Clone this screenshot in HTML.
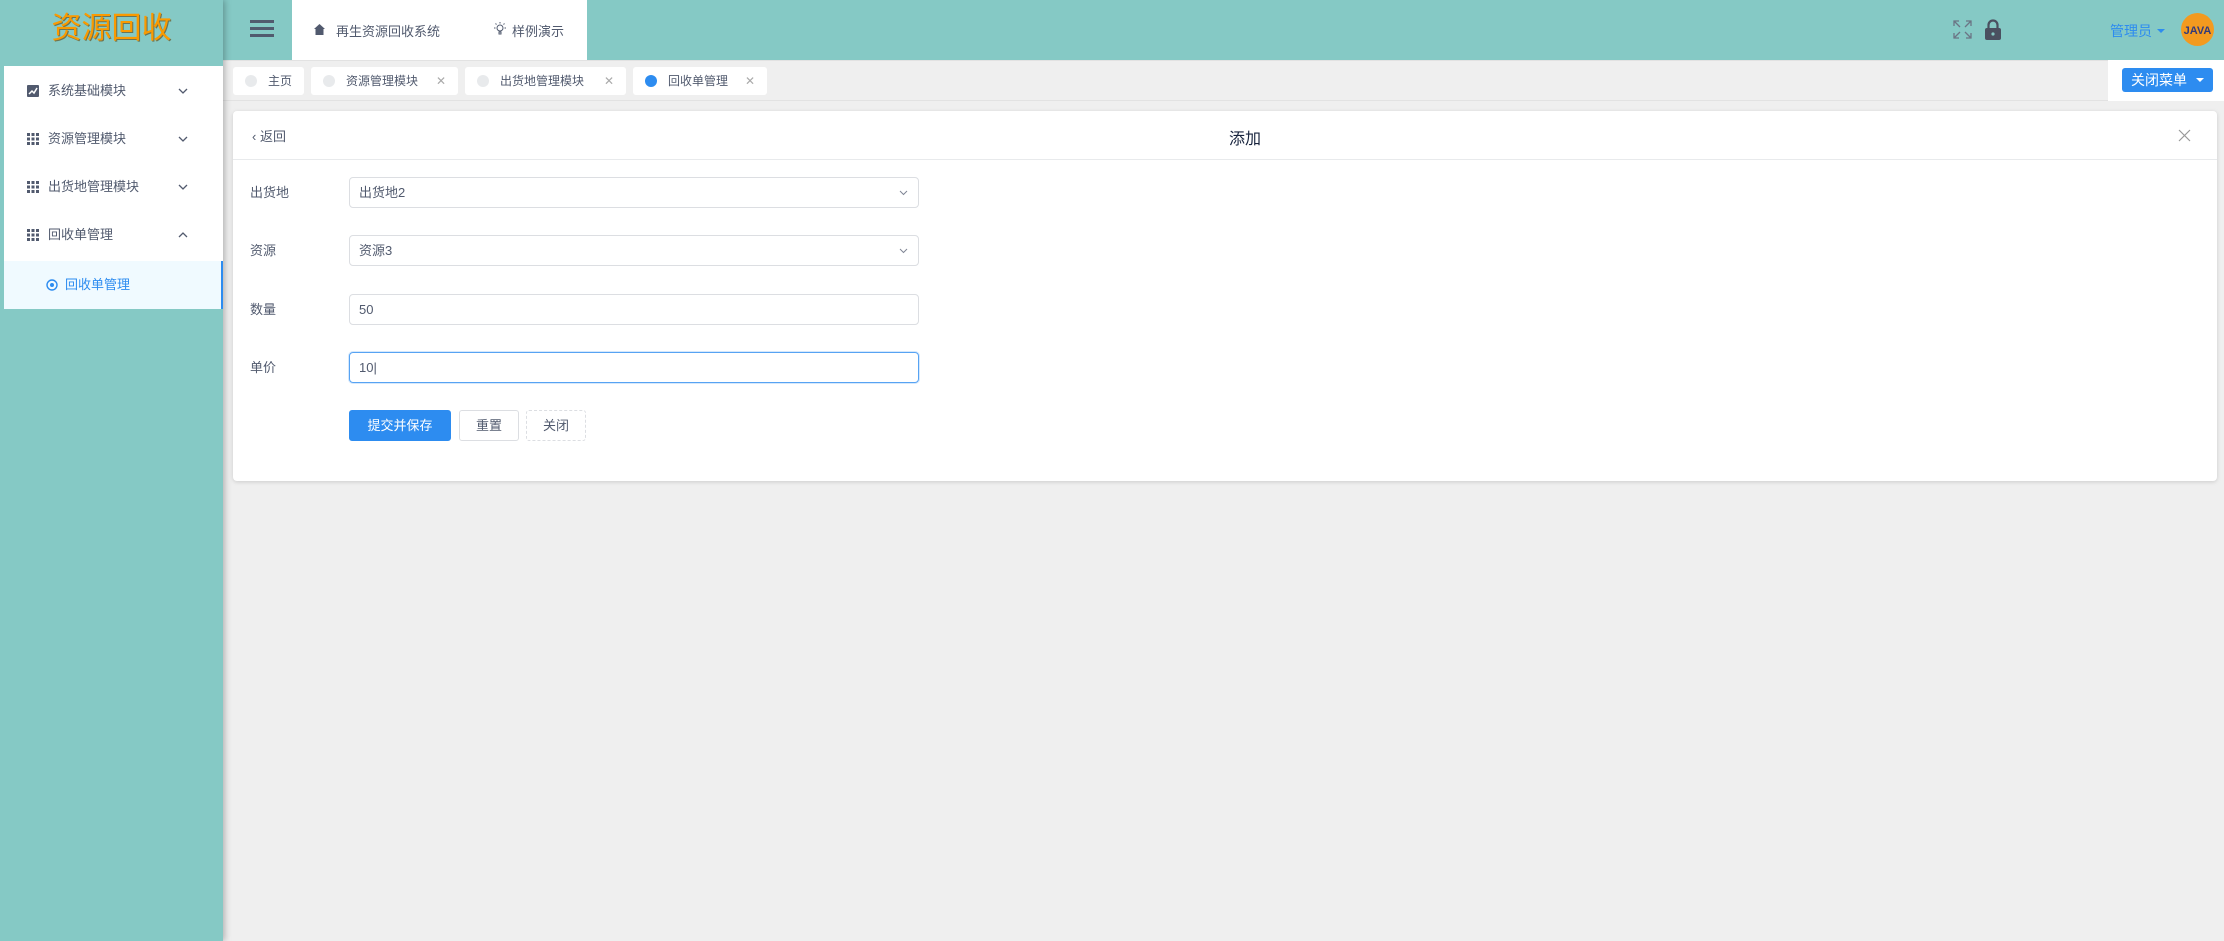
<!DOCTYPE html>
<html><head><meta charset="utf-8"><style>
*{box-sizing:border-box;margin:0;padding:0}
body{width:2224px;height:941px;overflow:hidden;background:#efefef;font-family:"Liberation Sans","Noto Sans CJK SC",sans-serif;font-size:14px;color:#515a6e;position:relative}
.abs{position:absolute}
#side{left:0;top:0;width:223px;height:941px;background:#85c9c5;box-shadow:2px 0 6px rgba(0,0,0,.25);z-index:3}
#logo{left:0;top:0;width:223px;height:62px;text-align:center;line-height:58px;font-size:30px;color:#fa9a00;text-shadow:1px 1px 0 rgba(90,60,10,.6)}
#menu{left:4px;top:66px;width:219px;height:243px;background:#fff}
.mi{position:absolute;left:0;width:219px;height:48px;line-height:48px;font-size:13px;color:#515a6e}
.mi .ic{position:absolute;left:23px;top:18px;width:12px;height:12px}
.mi .t{position:absolute;left:44px}
.mi .ch{position:absolute;left:174px;top:0;font-size:12px}
#sub{top:195px;height:48px;background:#f0faff;border-right:2px solid #2d8cf0;color:#2d8cf0}
#header{left:223px;top:0;right:0;height:60px;background:#85c9c5}
.ham{left:27px;top:20px;width:24px;height:3px;background:#515a6e}
#topw{left:69px;top:0;width:295px;height:60px;background:#fff}
.tabsbar{left:223px;top:60px;right:0;height:41px;background:#efefef;border-top:1px solid #e2e2e2;border-bottom:1px solid #e2e2e2}
.tab{position:absolute;top:6px;height:28px;background:#fff;border-radius:3px;font-size:12px;line-height:28px;color:#515a6e}
.tab .d{position:absolute;left:12px;top:8px;width:12px;height:12px;border-radius:50%;background:#e8eaec}
.tab .t{position:absolute;left:35px}
.tab .x{position:absolute;right:12px;color:#aaa;font-size:12px}
#card{left:233px;top:111px;width:1984px;height:370px;background:#fff;border-radius:4px;box-shadow:0 1px 4px rgba(0,0,0,.15)}
.lab{position:absolute;left:17px;font-size:13px;line-height:32px}
.inp{position:absolute;left:116px;width:570px;height:31px;border:1px solid #dcdee2;border-radius:4px;padding-left:9px;line-height:29px;font-size:13px;color:#515a6e}
.btn{position:absolute;top:299px;height:31px;border-radius:3px;font-size:13px;line-height:29px;text-align:center}
</style></head><body>
<div id="side" class="abs">
 <div id="logo" class="abs">资源回收</div>
 <div id="menu" class="abs">
  <div class="mi" style="top:1px"><svg class="ic" viewBox="0 0 12 12"><rect width="12" height="12" rx="1" fill="#515a6e"/><path d="M2 9 L5 6 L7 8 L10 3" stroke="#fff" stroke-width="1.5" fill="none"/></svg><span class="t">系统基础模块</span><svg class="ch" style="top:20px;width:10px;height:8px" viewBox="0 0 10 8"><path d="M1 2 L5 6 L9 2" stroke="#515a6e" fill="none" stroke-width="1.3"/></svg></div>
  <div class="mi" style="top:49px"><svg class="ic" viewBox="0 0 12 12" fill="#515a6e"><rect x="0" y="0" width="3" height="3"/><rect x="4.5" y="0" width="3" height="3"/><rect x="9" y="0" width="3" height="3"/><rect x="0" y="4.5" width="3" height="3"/><rect x="4.5" y="4.5" width="3" height="3"/><rect x="9" y="4.5" width="3" height="3"/><rect x="0" y="9" width="3" height="3"/><rect x="4.5" y="9" width="3" height="3"/><rect x="9" y="9" width="3" height="3"/></svg><span class="t">资源管理模块</span><svg class="ch" style="top:20px;width:10px;height:8px" viewBox="0 0 10 8"><path d="M1 2 L5 6 L9 2" stroke="#515a6e" fill="none" stroke-width="1.3"/></svg></div>
  <div class="mi" style="top:97px"><svg class="ic" viewBox="0 0 12 12" fill="#515a6e"><rect x="0" y="0" width="3" height="3"/><rect x="4.5" y="0" width="3" height="3"/><rect x="9" y="0" width="3" height="3"/><rect x="0" y="4.5" width="3" height="3"/><rect x="4.5" y="4.5" width="3" height="3"/><rect x="9" y="4.5" width="3" height="3"/><rect x="0" y="9" width="3" height="3"/><rect x="4.5" y="9" width="3" height="3"/><rect x="9" y="9" width="3" height="3"/></svg><span class="t">出货地管理模块</span><svg class="ch" style="top:20px;width:10px;height:8px" viewBox="0 0 10 8"><path d="M1 2 L5 6 L9 2" stroke="#515a6e" fill="none" stroke-width="1.3"/></svg></div>
  <div class="mi" style="top:145px"><svg class="ic" viewBox="0 0 12 12" fill="#515a6e"><rect x="0" y="0" width="3" height="3"/><rect x="4.5" y="0" width="3" height="3"/><rect x="9" y="0" width="3" height="3"/><rect x="0" y="4.5" width="3" height="3"/><rect x="4.5" y="4.5" width="3" height="3"/><rect x="9" y="4.5" width="3" height="3"/><rect x="0" y="9" width="3" height="3"/><rect x="4.5" y="9" width="3" height="3"/><rect x="9" y="9" width="3" height="3"/></svg><span class="t">回收单管理</span><svg class="ch" style="top:20px;width:10px;height:8px" viewBox="0 0 10 8"><path d="M1 6 L5 2 L9 6" stroke="#515a6e" fill="none" stroke-width="1.3"/></svg></div>
  <div class="mi" id="sub"><svg class="ic" style="left:42px" viewBox="0 0 12 12"><circle cx="6" cy="6" r="5" stroke="#2d8cf0" stroke-width="1.4" fill="none"/><circle cx="6" cy="6" r="2" fill="#2d8cf0"/></svg><span class="t" style="left:61px">回收单管理</span></div>
 </div>
</div>
<div id="header" class="abs">
 <div class="abs ham"></div><div class="abs ham" style="top:27px"></div><div class="abs ham" style="top:34px"></div>
 <div id="topw" class="abs">
  <svg class="abs" style="left:22px;top:24px" width="11" height="11" viewBox="0 0 11 11"><path d="M5.5 0 L11 5 L9.5 5 L9.5 11 L1.5 11 L1.5 5 L0 5 Z" fill="#515a6e"/></svg>
  <span class="abs" style="left:44px;top:21px;font-size:13px">再生资源回收系统</span>
  <svg class="abs" style="left:201px;top:22px" width="14" height="14" viewBox="0 0 14 14" stroke="#515a6e" fill="none"><circle cx="7" cy="6" r="3"/><path d="M6 10h2v2h-2zM7 0v1.5M1 6h1.5M11.5 6H13M2.5 1.5l1 1M11.5 1.5l-1 1"/></svg>
  <span class="abs" style="left:220px;top:21px;font-size:13px">样例演示</span>
 </div>
 <svg class="abs" style="left:1730px;top:20px" width="19" height="19" viewBox="0 0 19 19" stroke="#6b7585" stroke-width="1.3" fill="none"><path d="M1 6V1h5M1 1l6 6M18 6V1h-5M18 1l-6 6M1 13v5h5M1 18l6-6M18 13v5h-5M18 18l-6-6"/></svg>
 <svg class="abs" style="left:1762px;top:19px" width="16" height="21" viewBox="0 0 16 21"><path d="M3.5 9V6a4.5 4.5 0 0 1 9 0v3" stroke="#4a5060" stroke-width="2.2" fill="none"/><rect x="0" y="9" width="16" height="12" rx="2" fill="#4a5060"/><circle cx="8" cy="15" r="1.6" fill="#85c9c5"/></svg>
 <span class="abs" style="left:1887px;top:21px;color:#2d8cf0;font-size:14px">管理员</span>
 <span class="abs" style="left:1934px;top:29px;border:4px solid transparent;border-top:4px solid #2d8cf0"></span>
 <div class="abs" style="left:1958px;top:13px;width:33px;height:33px;border-radius:50%;background:#f39a1f;text-align:center;font-size:11px;font-weight:bold;color:#333a7a;line-height:36px">JAVA</div>
</div>
<div class="abs tabsbar">
 <div class="tab" style="left:10px;width:71px"><span class="d"></span><span class="t">主页</span></div>
 <div class="tab" style="left:88px;width:147px"><span class="d"></span><span class="t">资源管理模块</span><span class="x">✕</span></div>
 <div class="tab" style="left:242px;width:161px"><span class="d"></span><span class="t">出货地管理模块</span><span class="x">✕</span></div>
 <div class="tab" style="left:410px;width:134px"><span class="d" style="background:#2d8cf0"></span><span class="t">回收单管理</span><span class="x">✕</span></div>
 <div class="abs" style="left:1885px;top:-1px;width:116px;height:41px;background:#fff"></div>
 <div class="abs" style="left:1899px;top:7px;width:91px;height:24px;background:#2d8cf0;border-radius:3px;color:#fff;font-size:14px;line-height:24px;padding-left:9px">关闭菜单<span class="abs" style="left:74px;top:10px;border:4px solid transparent;border-top:4px solid #fff"></span></div>
</div>
<div id="card" class="abs">
 <span class="abs" style="left:19px;top:15px;font-size:13px">‹ 返回</span>
 <span class="abs" style="left:996px;top:14px;font-size:16px;color:#17233d">添加</span>
 <svg class="abs" style="left:1945px;top:18px" width="13" height="13" viewBox="0 0 13 13" stroke="#999" stroke-width="1.2"><path d="M1 1L12 12M12 1L1 12"/></svg>
 <div class="abs" style="left:0;top:48px;width:100%;height:1px;background:#e8eaec"></div>
 <span class="lab" style="top:66px">出货地</span><div class="inp" style="top:66px">出货地2<svg class="abs" style="right:10px;top:12px" width="9" height="6" viewBox="0 0 9 6"><path d="M1 1L4.5 4.5L8 1" stroke="#808695" fill="none"/></svg></div>
 <span class="lab" style="top:124px">资源</span><div class="inp" style="top:124px">资源3<svg class="abs" style="right:10px;top:12px" width="9" height="6" viewBox="0 0 9 6"><path d="M1 1L4.5 4.5L8 1" stroke="#808695" fill="none"/></svg></div>
 <span class="lab" style="top:183px">数量</span><div class="inp" style="top:183px">50</div>
 <span class="lab" style="top:241px">单价</span><div class="inp" style="top:241px;border-color:#57a3f3;box-shadow:0 0 0 1px rgba(45,140,240,.2)">10|</div>
 <div class="btn" style="left:116px;width:102px;background:#2d8cf0;color:#fff;border:1px solid #2d8cf0">提交并保存</div>
 <div class="btn" style="left:226px;width:60px;border:1px solid #dcdee2">重置</div>
 <div class="btn" style="left:293px;width:60px;border:1px dashed #dcdee2">关闭</div>
</div>
</body></html>
